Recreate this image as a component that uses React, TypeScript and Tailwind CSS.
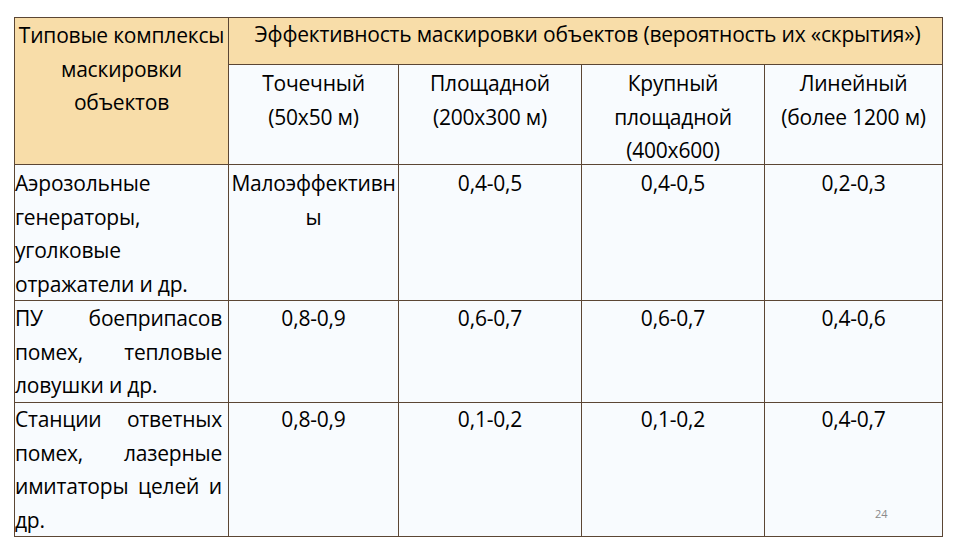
import React from 'react';

const border = 'border border-[#5b4634]';
const head = `${border} bg-[#f8dda9] align-top p-0`;
const cell = `${border} bg-[#f8fbfe] align-top p-0`;

type Row = { name: string[]; values: string[][]; h: string; pt: string };

const rows: Row[] = [
  {
    name: ['Аэрозольные', 'генераторы,', 'уголковые', 'отражатели и др.'],
    values: [['Малоэффективн', 'ы'], ['0,4-0,5'], ['0,4-0,5'], ['0,2-0,3']],
    h: 'h-[135px]',
    pt: 'pt-[2px]',
  },
  {
    name: ['ПУ боеприпасов', 'помех, тепловые', 'ловушки и др.'],
    values: [['0,8-0,9'], ['0,6-0,7'], ['0,6-0,7'], ['0,4-0,6']],
    h: 'h-[101px]',
    pt: 'pt-[1px]',
  },
  {
    name: ['Станции ответных', 'помех, лазерные', 'имитаторы целей и', 'др.'],
    values: [['0,8-0,9'], ['0,1-0,2'], ['0,1-0,2'], ['0,4-0,7']],
    h: 'h-[133px]',
    pt: 'pt-0',
  },
];

const kinds = [
  ['Точечный', '(50x50 м)'],
  ['Площадной', '(200x300 м)'],
  ['Крупный', 'площадной', '(400x600)'],
  ['Линейный', '(более 1200 м)'],
];

function Lines({ lines, className = '' }: { lines: string[]; className?: string }) {
  return (
    <div className={className}>
      {lines.map((l, i) => (
        <div key={i} className="whitespace-nowrap">{l}</div>
      ))}
    </div>
  );
}

export default function App() {
  return (
    <div
      className="relative w-[960px] h-[540px] bg-white text-black overflow-hidden"
      style={{ fontFamily: '"Open Sans", "Noto Sans", sans-serif' }}
    >
      <div className="pt-[17px] pl-[14px]">
        <table className="table-fixed border-collapse w-[928px] text-[21px] leading-[33.5px] tracking-[-0.2px]">
          <colgroup>
            <col className="w-[214px]" />
            <col className="w-[170px]" />
            <col className="w-[183px]" />
            <col className="w-[183px]" />
            <col className="w-[178px]" />
          </colgroup>
          <tbody>
            <tr>
              <td rowSpan={2} className={head}>
                <Lines className="text-center pt-[1px]" lines={['Типовые комплексы', 'маскировки', 'объектов']} />
              </td>
              <td colSpan={4} className={head}>
                <div className="h-[46px] text-center pl-[4px] whitespace-nowrap">
                  Эффективность маскировки объектов (вероятность их «скрытия»)
                </div>
              </td>
            </tr>
            <tr>
              {kinds.map((k, i) => (
                <td key={i} className={cell}>
                  <div className="h-[99px]">
                    <Lines className="text-center pt-[2px]" lines={k} />
                  </div>
                </td>
              ))}
            </tr>
            {rows.map((r, ri) => (
              <tr key={ri}>
                <td className={cell}>
                  <div className={`${r.h} ${r.pt} pr-[6px]`}>
                    {r.name.map((l, i) => (
                      <div
                        key={i}
                        className={
                          i < r.name.length - 1 && l.includes(' ')
                            ? 'whitespace-nowrap text-justify [text-align-last:justify]'
                            : 'whitespace-nowrap text-left'
                        }
                      >
                        {l}
                      </div>
                    ))}
                  </div>
                </td>
                {r.values.map((v, vi) => (
                  <td key={vi} className={cell}>
                    <div className={r.h}>
                      <Lines className={`text-center ${r.pt}`} lines={v} />
                    </div>
                  </td>
                ))}
              </tr>
            ))}
          </tbody>
        </table>
      </div>
      <div className="absolute left-[875px] top-[506px] text-[11px] text-[#8a8a8a]">24</div>
    </div>
  );
}
